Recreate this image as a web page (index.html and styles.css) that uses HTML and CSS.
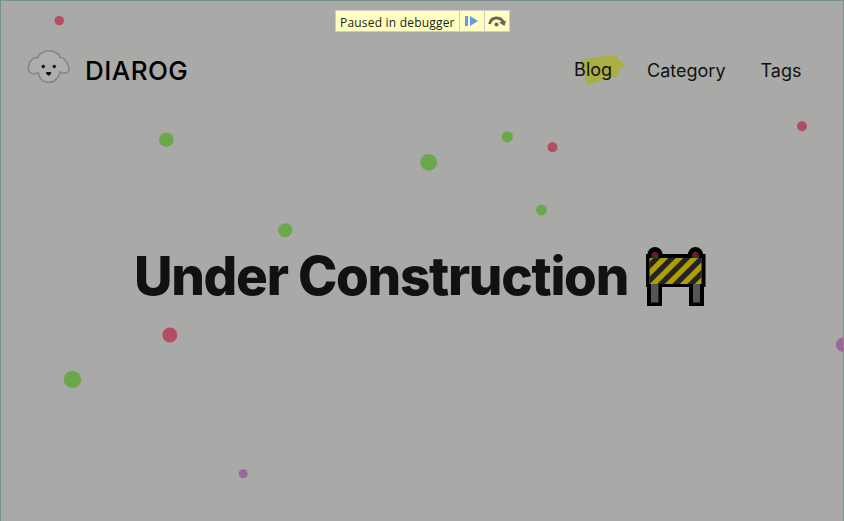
FILE: index.html
```html
<!DOCTYPE html>
<html lang="en">
<head>
<meta charset="utf-8">
<title>DIAROG</title>
<link rel="stylesheet" href="styles.css">
</head>
<body>
<svg class="particles" viewBox="0 0 844 521" aria-hidden="true">
  <g class="red"><circle cx="59.3" cy="20.6" r="4.7"/><circle cx="802" cy="126.3" r="5"/><circle cx="552.5" cy="147.3" r="5"/><circle cx="169.8" cy="335" r="7.5"/></g>
  <g class="green"><circle cx="166.3" cy="139.7" r="7.3"/><circle cx="428.7" cy="162.3" r="8.4"/><circle cx="507.4" cy="136.8" r="5.6"/><circle cx="541.5" cy="210" r="5.4"/><circle cx="285.2" cy="230.2" r="7"/><circle cx="72.4" cy="379.4" r="8.7"/></g>
  <g class="purple"><circle cx="843.2" cy="344.7" r="7.3"/><circle cx="243.2" cy="473.7" r="4.5"/></g>
</svg>
<header class="header">
  <a class="brand">
    <svg class="logo" viewBox="0 0 44 36" aria-hidden="true">
      <path class="fur" d="M11 8.500Q12 4.500 15 4Q18 1.500 22 1.800Q26 1.500 29 4Q32 4.500 33 8.500Q36 8 38 11Q41 14 41 17Q43 21 41 23Q37 25.500 33 23Q32 28 29 30Q27 33 22 33.500Q17 33 15 31Q12 29 11.500 23.500Q6 26 3 23.500Q0 21 2 17Q2 13 5 10.500Q8 8 11 8.500Z"/>
      <circle cx="16.300" cy="17.500" r="1.700"/><circle cx="27.300" cy="17.500" r="1.700"/>
      <path d="M19.200 23H24Q25 24.500 23 26Q21.700 27 20.500 26Q18.300 24.500 19.200 23Z"/>
    </svg>
    <span class="name">DIAROG</span>
  </a>
  <nav class="nav">
    <a class="active"><svg class="marker" viewBox="0 0 46 30" aria-hidden="true"><path d="M2 4L17 1L38 -0.500L39 4L47 8.500L39 15V21L30 22L15 27L7 28.500L6 19L3 12L4 8Z"/></svg><span>Blog</span></a>
    <a class="category">Category</a>
    <a class="tags">Tags</a>
  </nav>
</header>
<main class="hero">
  <h1>Under Construction</h1>
  <svg class="barrier" viewBox="0 0 62 60" role="img" aria-label="Construction barrier">
    <defs><clipPath id="board"><rect x="4.500" y="11" width="52" height="26"/></clipPath></defs>
    <circle cx="10" cy="7.500" r="7.500"/><circle cx="50.500" cy="7.500" r="7.500"/>
    <path d="M1 7H60.500V40H59V59H44V40H17V59H2V40H1Z"/>
    <path class="post" d="M6 37H13.500V55.500H6ZM48 37H55V55.500H48Z"/>
    <path class="lamp" d="M6.500 11V7Q10 2 13.500 7V11ZM47 11V7Q50.500 2 54 7V11Z"/>
    <circle class="bulb" cx="10" cy="7.500" r="1.800"/><circle class="bulb" cx="50.500" cy="7.500" r="1.800"/>
    <g clip-path="url(#board)"><rect class="yellow" x="4" y="10" width="54" height="28"/>
    <path class="stripes" d="M-17 40L17 6M-2 40L32 6M13 40L47 6M28 40L62 6M43 40L77 6"/></g>
  </svg>
</main>
<aside class="debugger">
  <span class="message">Paused in debugger</span>
  <span class="control"><svg viewBox="0 0 24 20"><path class="resume" d="M5 5H8V15H5ZM10 5L18 10L10 15Z"/></svg></span>
  <span class="control"><svg viewBox="0 0 24 20"><path class="step" d="M4.500 13Q6 7 11.500 7Q17 7 18.500 12"/><path class="stephead" d="M14 11.500L21 9.500L19.500 15Z"/><circle class="stephead" cx="11.500" cy="13.500" r="2"/></svg></span>
</aside>
</body>
</html>
```
FILE: styles.css
```css
* { box-sizing: border-box; }
body {
  margin: 0;
  height: 521px;
  overflow: hidden;
  position: relative;
  background: #a9a9a7;
  border: 1px solid #78918a;
  border-bottom: 0;
  color: #111;
  font-family: Inter, sans-serif;
}
svg { display: block; }
.particles { position: absolute; left: -1px; top: -1px; width: 844px; height: 521px; }
.red { fill: #b44c62; }
.green { fill: #6ba84c; }
.purple { fill: #9b6998; }
.header {
  position: relative;
  height: 138px;
  display: flex;
  justify-content: space-between;
  padding: 0 41.5px 0 26px;
}
.brand { display: flex; height: 138px; }
.logo { width: 44px; height: 36px; margin-top: 48px; fill: #111; }
.fur { fill: #aeaeae; stroke: #858587; stroke-width: 1.6; }
.name { margin: 54px 0 0 14px; font-size: 26px; line-height: 32px; font-weight: 500; letter-spacing: .45px; color: #000; }
.nav { display: flex; padding-top: 58px; font-size: 18px; line-height: 24px; gap: 35px; }
.active { position: relative; margin-top: -1px; }
.active span { position: relative; }
.marker { position: absolute; left: 5px; top: -2px; width: 46px; height: 30px; fill: #acae43; overflow: visible; }
.hero { position: relative; display: flex; padding: 102px 0 0 133px; }
h1 { margin: 0; width: 494px; font-size: 53px; line-height: 70px; font-weight: 800; letter-spacing: -1.3px; white-space: nowrap; }
.barrier { width: 62px; height: 60px; margin: 6px 0 0 16.5px; }
.post { fill: #555; }
.lamp { fill: #343434; }
.bulb { fill: #b00018; }
.yellow { fill: #b09e00; }
.stripes { fill: none; stroke: #242424; stroke-width: 5.3; }
.debugger {
  position: absolute;
  left: 334px;
  top: 9px;
  width: 175px;
  height: 22px;
  display: flex;
  background: #ffffc2;
  border: 1px solid #ccc;
  font: 12px/22px "Open Sans", sans-serif;
  color: #222;
}
.message { width: 124px; padding: 1px 0 0 4px; letter-spacing: .2px; white-space: nowrap; }
.control { width: 25px; border-left: 1px solid #ccc; }
.control svg { width: 24px; height: 20px; }
.resume { fill: #6699e8; }
.step { fill: none; stroke: #66654f; stroke-width: 2.8; }
.stephead { fill: #66654f; }
```
